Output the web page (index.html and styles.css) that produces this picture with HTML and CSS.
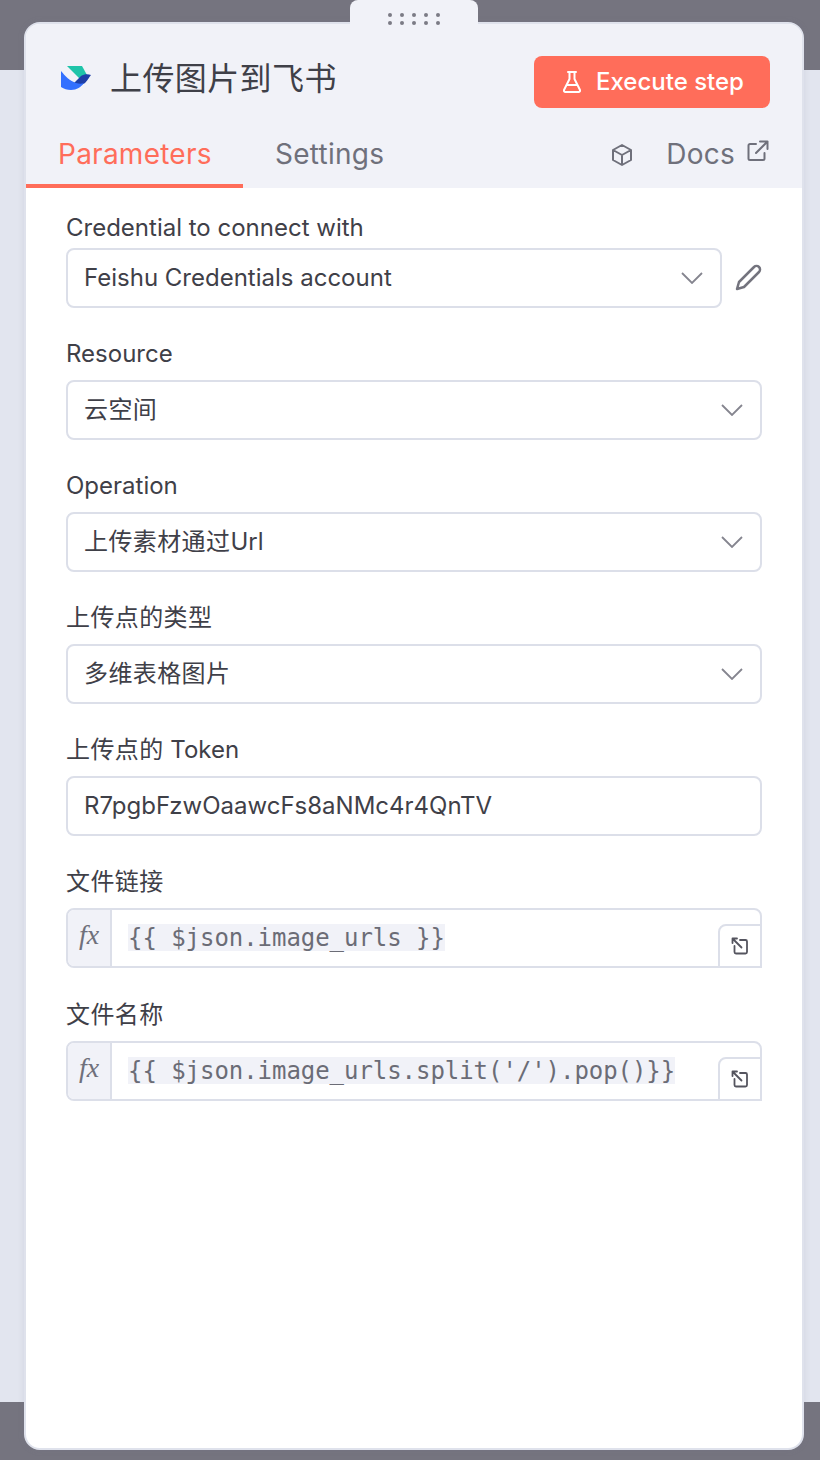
FILE: index.html
```html
<!DOCTYPE html>
<html lang="zh">
<head>
<meta charset="utf-8">
<title>上传图片到飞书</title>
<link rel="stylesheet" href="styles.css">
</head>
<body>
<div class="backdrop">
  <div class="band-dark band-top"></div>
  <div class="band-light"></div>
  <div class="band-dark band-bottom"></div>
</div>
<div class="handle">
  <svg width="56" height="14" viewBox="0 0 56 14" fill="#7b7b85"><circle cx="4" cy="3" r="2"/><circle cx="16" cy="3" r="2"/><circle cx="28" cy="3" r="2"/><circle cx="40" cy="3" r="2"/><circle cx="52" cy="3" r="2"/><circle cx="4" cy="11" r="2"/><circle cx="16" cy="11" r="2"/><circle cx="28" cy="11" r="2"/><circle cx="40" cy="11" r="2"/><circle cx="52" cy="11" r="2"/></svg>
</div>
<main class="card">
  <header class="head">
    <div class="title-row">
      <div class="title-group">
        <svg class="logo" width="32" height="26" viewBox="0 0 32 26"><path d="M7 0h15l5 9-7 4z" fill="#1fc4a9"/><path d="M14 17l7-7c3-2 7-2 10-1-2 2-3 5-6 8-3 2-8 2-11 0z" fill="#1e3fa8"/><path d="M1 5c4 5 9 10 15 12 3 1 6 1 8 0-3 4-7 7-13 7-4 0-7-1-10-3z" fill="#3370ff"/></svg>
        <h1 class="title">上传图片到飞书</h1>
      </div>
      <button class="run">
        <svg width="20" height="24" viewBox="0 0 20 24" fill="none" stroke="#fff" stroke-width="2" stroke-linejoin="round" stroke-linecap="round"><path d="M6 2h8M7.500 2v7L2 20a1.500 1.500 0 0 0 1.400 2h13.200a1.500 1.500 0 0 0 1.400-2L12.500 9V2M4.500 15h11"/></svg>
        <span class="run-text">Execute step</span>
      </button>
    </div>
    <nav class="tabs">
      <div class="tab active">Parameters</div>
      <div class="tab">Settings</div>
      <div class="tab-right">
        <svg class="cube" width="22" height="24" viewBox="0 0 22 24" fill="none" stroke="#6f707b" stroke-width="2" stroke-linejoin="round"><path d="M11 2l9 5v10l-9 5-9-5V7zM2 7l9 5 9-5M11 12v10"/></svg>
        <span class="docs">Docs</span>
        <svg class="ext" width="22" height="22" viewBox="0 0 22 22" fill="none" stroke="#6f707b" stroke-width="2" stroke-linecap="round" stroke-linejoin="round"><path d="M9 4H3a1.500 1.500 0 0 0-1.500 1.500v13A1.500 1.500 0 0 0 3 20h13a1.500 1.500 0 0 0 1.500-1.500V13M13 1.500h7.500V9M20.500 1.500L9 13"/></svg>
      </div>
    </nav>
  </header>
  <section class="form">
    <div class="field field-first">
      <label class="label">Credential to connect with</label>
      <div class="with-action">
        <div class="input select">Feishu Credentials account
          <svg class="chev" width="22" height="12" viewBox="0 0 22 12" fill="none" stroke="#85858f" stroke-width="1.800"><path d="M1 1l10 10L21 1"/></svg>
        </div>
        <svg class="pencil" width="28" height="28" viewBox="0 0 28 28" fill="none" stroke="#74747e" stroke-width="2.500" stroke-linejoin="round"><path d="M3 25l2-7L20 3a3 3 0 0 1 5 5L10 23z"/></svg>
      </div>
    </div>
    <div class="field">
      <label class="label">Resource</label>
      <div class="input select"><span class="cjk">云空间</span>
        <svg class="chev" width="22" height="12" viewBox="0 0 22 12" fill="none" stroke="#85858f" stroke-width="1.800"><path d="M1 1l10 10L21 1"/></svg>
      </div>
    </div>
    <div class="field">
      <label class="label">Operation</label>
      <div class="input select"><span class="cjk">上传素材通过</span>Url
        <svg class="chev" width="22" height="12" viewBox="0 0 22 12" fill="none" stroke="#85858f" stroke-width="1.800"><path d="M1 1l10 10L21 1"/></svg>
      </div>
    </div>
    <div class="field">
      <label class="label cjk">上传点的类型</label>
      <div class="input select"><span class="cjk">多维表格图片</span>
        <svg class="chev" width="22" height="12" viewBox="0 0 22 12" fill="none" stroke="#85858f" stroke-width="1.800"><path d="M1 1l10 10L21 1"/></svg>
      </div>
    </div>
    <div class="field">
      <label class="label"><span class="cjk">上传点的</span> Token</label>
      <div class="input">R7pgbFzwOaawcFs8aNMc4r4QnTV</div>
    </div>
    <div class="field field-expr">
      <label class="label cjk">文件链接</label>
      <div class="expr">
        <div class="fx">fx</div>
        <div class="code"><span class="mark">{{ $json.image_urls }}</span></div>
        <div class="expand">
          <svg width="18" height="18" viewBox="0 0 18 18" fill="none" stroke="#55555f" stroke-width="1.800" stroke-linecap="round" stroke-linejoin="round"><path d="M1.500 6V1.500H6M1.500 1.500l9 9M9 3h5.500A1.500 1.500 0 0 1 16 4.500V15a1.500 1.500 0 0 1-1.500 1.500H5A1.500 1.500 0 0 1 3.500 15V9"/></svg>
        </div>
      </div>
    </div>
    <div class="field">
      <label class="label cjk">文件名称</label>
      <div class="expr">
        <div class="fx">fx</div>
        <div class="code"><span class="mark">{{ $json.image_urls.split('/').pop()}}</span></div>
        <div class="expand">
          <svg width="18" height="18" viewBox="0 0 18 18" fill="none" stroke="#55555f" stroke-width="1.800" stroke-linecap="round" stroke-linejoin="round"><path d="M1.500 6V1.500H6M1.500 1.500l9 9M9 3h5.500A1.500 1.500 0 0 1 16 4.500V15a1.500 1.500 0 0 1-1.500 1.500H5A1.500 1.500 0 0 1 3.500 15V9"/></svg>
        </div>
      </div>
    </div>
  </section>
</main>
</body>
</html>
```
FILE: styles.css
```css
* { box-sizing: border-box; }
html, body { margin: 0; padding: 0; }
body {
  width: 820px;
  height: 1460px;
  position: relative;
  overflow: hidden;
  font-family: Inter, "Noto Sans CJK SC", sans-serif;
  color: #3f4048;
}
.backdrop { display: flex; flex-direction: column; height: 1460px; }
.band-dark { background: #75747f; }
.band-top { height: 70px; }
.band-light { height: 1332px; background: #e2e5ef; }
.band-bottom { height: 58px; }
.card {
  position: absolute;
  left: 24px;
  top: 22px;
  width: 780px;
  height: 1428px;
  border: 2px solid #dfe2ec;
  border-radius: 16px;
  background: #fff;
  box-shadow: 0 0 6px rgba(120, 120, 140, 0.15);
  overflow: hidden;
  display: flex;
  flex-direction: column;
}
.handle {
  position: absolute;
  left: 350px;
  top: 0;
  z-index: 2;
  width: 128px;
  height: 26px;
  background: #f1f2f8;
  border-top-left-radius: 8px;
  border-top-right-radius: 8px;
  display: flex;
  justify-content: center;
  padding-top: 12px;
}
.handle svg { display: block; }
.head { background: #f1f2f8; height: 164px; flex: none; display: flex; flex-direction: column; }
.title-row {
  height: 102px;
  padding: 32px 32px 0 34px;
  display: flex;
  justify-content: space-between;
  align-items: flex-start;
}
.title-group { display: flex; align-items: center; gap: 18px; height: 46px; }
.logo { display: block; }
.title { margin: 0; font-size: 32px; font-weight: 400; letter-spacing: 0.4px; color: #3f4048; line-height: 46px; }
.run {
  width: 236px;
  height: 52px;
  border: 0;
  border-radius: 8px;
  background: #ff6d5a;
  color: #fff;
  font: 500 24px Inter, sans-serif;
  display: flex;
  align-items: center;
  padding: 0 0 0 28px;
  gap: 14px;
}
.run svg { display: block; }
.run-text { padding-bottom: 2px; }
.tabs { display: flex; height: 62px; padding-right: 33px; align-items: stretch; }
.tab {
  font-size: 28px;
  font-weight: 400;
  color: #6f707b;
  padding: 11px 32px 0;
  line-height: 34px;
  letter-spacing: 0.25px;
}
.tab.active {
  color: #ff6d5a;
  width: 217px;
  border-bottom: 4px solid #ff6d5a;
}
.tab-right { margin-left: auto; display: flex; align-items: flex-start; padding-top: 9px; color: #6f707b; }
.cube { margin-top: 8px; display: block; }
.docs { font-size: 28px; margin-left: 33px; line-height: 34px; margin-top: 2px; letter-spacing: 0.25px; }
.ext { display: block; margin-left: 12px; margin-top: 5px; }
.form { padding: 0 40px; flex: 1; }
.field { padding-top: 14px; padding-bottom: 12px; }
.label { display: block; font-size: 24px; line-height: 40px; height: 40px; margin-bottom: 6px; color: #3f4048; }
.field-first { padding-top: 20px; }
.field-first .label { margin-bottom: 0; }
.cjk { letter-spacing: 0.4px; }
.input {
  height: 60px;
  border: 2px solid #dcdfe9;
  border-radius: 8px;
  background: #fff;
  font-size: 24px;
  line-height: 56px;
  padding-left: 16px;
  color: #3f4048;
  position: relative;
}
.select { padding-right: 60px; }
.chev { position: absolute; right: 17px; top: 22px; }
.with-action { display: flex; align-items: center; gap: 12px; }
.with-action .input { flex: 1; }
.pencil { display: block; flex: none; }
.field-expr { padding-bottom: 13px; }
.expr {
  height: 60px;
  border: 2px solid #dcdfe9;
  border-radius: 8px;
  display: flex;
  position: relative;
}
.fx {
  width: 44px;
  background: #f1f2f8;
  border-right: 2px solid #dcdfe9;
  border-radius: 6px 0 0 6px;
  font: italic 28px "Liberation Serif", serif;
  color: #6f707b;
  text-align: center;
  line-height: 50px;
}
.code { padding: 14px 16px 0; flex: 1; }
.mark {
  display: block;
  width: fit-content;
  height: 27px;
  background: #f1f2f8;
  font: 24px/28px "DejaVu Sans Mono", monospace;
  letter-spacing: -0.05px;
  color: #6b6c76;
  white-space: pre;
}
.expand {
  position: absolute;
  right: -2px;
  bottom: -2px;
  width: 44px;
  height: 44px;
  background: #fff;
  border: 2px solid #dcdfe9;
  border-top-left-radius: 8px;
  display: flex;
  align-items: center;
  justify-content: center;
}
```
